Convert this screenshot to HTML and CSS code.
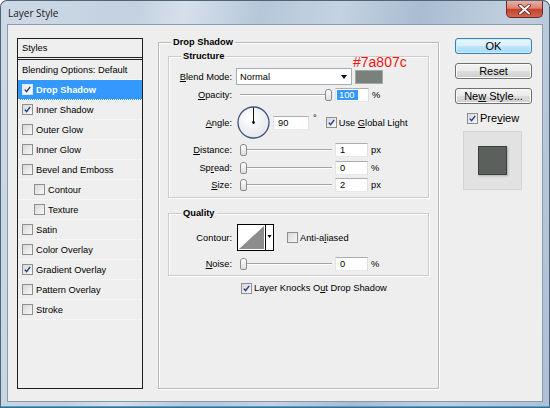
FILE: index.html
```html
<!DOCTYPE html>
<html lang="en">
<head>
    <meta charset="UTF-8">
    <title>Layer Style</title>
    <link rel="stylesheet" href="styles.css">
</head>
<body>
<div class="window">
    <div class="titlebar">
        <span class="title">Layer Style</span>
        <span class="close">
            <svg width="13" height="11" viewBox="0 0 13 11">
                <path d="M2 1.5 L11 9.5 M11 1.5 L2 9.5" stroke="#5a1f18" stroke-width="3.6" stroke-linecap="round"/>
                <path d="M2 1.5 L11 9.5 M11 1.5 L2 9.5" stroke="#fff" stroke-width="2" stroke-linecap="round"/>
            </svg>
        </span>
    </div>

    <div class="client">
        <!-- styles list -->
        <div class="styles-list">
            <div class="list-head">Styles</div>
            <div class="list-row">Blending Options: Default</div>
            <div class="list-row selected"><span class="cb on"><svg viewBox="0 0 11 11"><path d="M2.2 5.6 L4.4 8.2 L8.8 2.2"/></svg></span>Drop Shadow</div>
            <div class="list-row"><span class="cb on"><svg viewBox="0 0 11 11"><path d="M2.2 5.6 L4.4 8.2 L8.8 2.2"/></svg></span>Inner Shadow</div>
            <div class="list-row"><span class="cb"></span>Outer Glow</div>
            <div class="list-row"><span class="cb"></span>Inner Glow</div>
            <div class="list-row"><span class="cb"></span>Bevel and Emboss</div>
            <div class="list-row sub-row"><span class="cb"></span>Contour</div>
            <div class="list-row sub-row"><span class="cb"></span>Texture</div>
            <div class="list-row"><span class="cb"></span>Satin</div>
            <div class="list-row"><span class="cb"></span>Color Overlay</div>
            <div class="list-row"><span class="cb on"><svg viewBox="0 0 11 11"><path d="M2.2 5.6 L4.4 8.2 L8.8 2.2"/></svg></span>Gradient Overlay</div>
            <div class="list-row"><span class="cb"></span>Pattern Overlay</div>
            <div class="list-row"><span class="cb"></span>Stroke</div>
        </div>

        <!-- drop shadow panel -->
        <div class="group panel">
            <div class="group-title">Drop Shadow</div>

            <div class="group structure">
                <div class="group-title sub-title">Structure</div>

                <div class="row row-blend">
                    <span class="lbl"><u>B</u>lend Mode:</span>
                    <div class="select">Normal<span class="arrow"></span></div>
                    <div class="swatch"><span class="swatch-note">#7a807c</span></div>
                </div>

                <div class="row row-18">
                    <span class="lbl"><u>O</u>pacity:</span>
                    <div class="slider end"><span class="thumb"></span></div>
                    <div class="num"><span class="sel">100</span></div>
                    <span class="unit">%</span>
                </div>

                <div class="row row-angle">
                    <span class="lbl"><u>A</u>ngle:</span>
                    <svg class="dial" width="33" height="33" viewBox="0 0 33 33">
                        <defs>
                            <radialGradient id="dialfill" cx="0.4" cy="0.35" r="0.7">
                                <stop offset="0" stop-color="#ffffff"/>
                                <stop offset="1" stop-color="#e4e6ea"/>
                            </radialGradient>
                        </defs>
                        <circle cx="16.5" cy="16.5" r="15.5" fill="url(#dialfill)" stroke="#3f5480" stroke-width="1.3"/>
                        <line x1="16.5" y1="16.5" x2="16.5" y2="1.5" stroke="#111" stroke-width="1"/>
                        <circle cx="16.5" cy="16.5" r="1.4" fill="#111"/>
                    </svg>
                    <div class="num num-angle">90</div>
                    <span class="deg">°</span>
                    <span class="cb on cb-global"><svg viewBox="0 0 11 11"><path d="M2.2 5.6 L4.4 8.2 L8.8 2.2"/></svg></span>
                    <span class="cb-text">Use <u>G</u>lobal Light</span>
                </div>

                <div class="row row-18">
                    <span class="lbl"><u>D</u>istance:</span>
                    <div class="slider"><span class="thumb"></span></div>
                    <div class="num num-short">1</div>
                    <span class="unit">px</span>
                </div>

                <div class="row row-17">
                    <span class="lbl">Sp<u>r</u>ead:</span>
                    <div class="slider"><span class="thumb"></span></div>
                    <div class="num num-short">0</div>
                    <span class="unit">%</span>
                </div>

                <div class="row row-18">
                    <span class="lbl"><u>S</u>ize:</span>
                    <div class="slider"><span class="thumb"></span></div>
                    <div class="num num-short">2</div>
                    <span class="unit">px</span>
                </div>
            </div>

            <div class="group quality">
                <div class="group-title sub-title">Quality</div>

                <div class="row row-contour">
                    <span class="lbl">Contour:</span>
                    <svg class="contour" width="37" height="27" viewBox="0 0 37 27">
                        <rect x="0.5" y="0.5" width="36" height="26" fill="#fff" stroke="#000"/>
                        <polygon points="2,25 27,2 27,25" fill="#8c8c8c"/>
                        <line x1="28.5" y1="1" x2="28.5" y2="26" stroke="#000"/>
                        <polygon points="30.5,11 34.5,11 32.5,14" fill="#000"/>
                    </svg>
                    <span class="cb cb-anti"></span>
                    <span class="cb-text">Anti-a<u>l</u>iased</span>
                </div>

                <div class="row row-18 row-noise">
                    <span class="lbl"><u>N</u>oise:</span>
                    <div class="slider"><span class="thumb"></span></div>
                    <div class="num num-short">0</div>
                    <span class="unit">%</span>
                </div>
            </div>

            <div class="row knock">
                <span class="cb on"><svg viewBox="0 0 11 11"><path d="M2.2 5.6 L4.4 8.2 L8.8 2.2"/></svg></span>
                <span class="cb-text">Layer Knocks O<u>u</u>t Drop Shadow</span>
            </div>
        </div>

        <!-- buttons -->
        <div class="side">
            <div class="btn default">OK</div>
            <div class="btn">Reset</div>
            <div class="btn">Ne<u>w</u> Style...</div>
            <div class="preview-row">
                <span class="cb on"><svg viewBox="0 0 11 11"><path d="M2.2 5.6 L4.4 8.2 L8.8 2.2"/></svg></span>
                <span class="cb-text">Pre<u>v</u>iew</span>
            </div>
            <div class="preview">
                <div class="preview-square"></div>
            </div>
        </div>
    </div>
</div>
</body>
</html>
```

FILE: styles.css
```css
* {
    box-sizing: border-box;
}

body {
    margin: 0;
    width: 550px;
    height: 408px;
    overflow: hidden;
    background: #fff;
    font-family: "Liberation Sans", Arial, sans-serif;
    color: #000;
}

u {
    text-decoration: underline;
    text-underline-offset: 1px;
}

/* window frame */
.window {
    width: 550px;
    height: 408px;
    padding: 0 7px 6px;
    border-radius: 7px 7px 0 0;
    background: linear-gradient(100deg, #cdd9e6 0%, #c3d1e0 22%, #d6e0eb 30%, #b6c7da 42%, #c4d2e2 55%, #a9bcd2 68%, #c0cfdf 82%, #aec0d5 100%);
    box-shadow: inset 0 0 0 1px #51657a, inset 0 -2px 0 #3aa8d8;
}

.titlebar {
    height: 24px;
    display: flex;
    justify-content: space-between;
    align-items: flex-start;
}

.titlebar .title {
    padding: 6px 0 0 1px;
    font-family: "Open Sans", sans-serif;
    font-size: 10px;
    line-height: 14px;
    color: #1a1a1a;
}

.titlebar .close {
    width: 37px;
    height: 17px;
    margin-top: 1px;
    border: 1px solid #6b2a22;
    border-top: none;
    border-radius: 0 0 5px 5px;
    background: linear-gradient(#e9b0a5 0%, #dc8273 45%, #c5432f 52%, #d2644d 100%);
    display: flex;
    justify-content: center;
    align-items: center;
}

.client {
    height: 378px;
    background: #eeeeee;
    border: 1px solid #8b9aab;
    display: flex;
    align-items: flex-start;
    padding: 13px 0 0 9px;
    font-size: 9.3px;
}

/* checkboxes */
.cb {
    width: 11px;
    height: 11px;
    flex: none;
    border: 1px solid #8f8f8f;
    background: linear-gradient(135deg, #d8d8d8, #f8f8f8);
    display: inline-flex;
}

.cb svg {
    width: 9px;
    height: 9px;
}

.cb svg path {
    fill: none;
    stroke: #1f3b8c;
    stroke-width: 1.7;
}

.cb-text {
    margin-left: 2px;
    white-space: nowrap;
}

/* styles list */
.styles-list {
    width: 126px;
    height: 351px;
    flex: none;
    border: 1px solid #1e1e1e;
    background: #efefef;
}

.list-head {
    height: 21px;
    padding: 3px 0 0 4px;
    line-height: 12px;
    border-bottom: 3px double #222;
}

.list-row {
    height: 20px;
    padding-left: 4px;
    display: flex;
    align-items: center;
    border-bottom: 1px dotted #fdfdfd;
    white-space: nowrap;
}

.list-row .cb {
    margin-right: 3px;
}

.list-row.sub-row {
    padding-left: 16px;
}

.list-row.selected {
    background: #3399ff;
    color: #fff;
    font-weight: bold;
}

.list-row.selected .cb {
    border-color: #dfe9f5;
    background: linear-gradient(135deg, #e6e6e6, #ffffff);
}

/* grouped panels */
.group {
    border: 1px solid #b9b9b9;
    box-shadow: 1px 1px 0 #fff, inset 1px 1px 0 #fff;
}

.group-title {
    display: table;
    margin: -6px 0 0 3px;
    padding: 0 2px;
    line-height: 11px;
    font-weight: bold;
    background: #eeeeee;
}

.group-title.sub-title {
    margin-left: 12px;
}

.panel {
    width: 281px;
    height: 347px;
    flex: none;
    margin: 4px 0 0 15px;
    padding: 0 9px;
}

.structure {
    margin-top: 8px;
    padding-bottom: 3px;
    border-color: #cbcbcb;
}

.quality {
    margin-top: 15px;
    padding-bottom: 2px;
    border-color: #cbcbcb;
}

/* rows */
.row {
    display: flex;
    align-items: center;
    white-space: nowrap;
}

.lbl {
    width: 63px;
    flex: none;
    margin-right: 4px;
    text-align: right;
}

.row-blend {
    height: 19px;
    margin-top: 5px;
}

.row-18 {
    height: 18px;
}

.row-17 {
    height: 17px;
}

.row-angle {
    height: 37px;
}

.row-contour {
    height: 31px;
    margin-top: 3px;
}

.row-noise {
    margin-top: 2px;
}

.knock {
    height: 14px;
    margin-top: 5px;
    padding-left: 73px;
}

/* controls */
.select {
    width: 116px;
    height: 17px;
    border: 1px solid #a7adb5;
    background: #fff;
    padding: 0 4px 0 3px;
    display: flex;
    align-items: center;
    justify-content: space-between;
}

.select .arrow {
    width: 0;
    height: 0;
    border-top: 4px solid #111;
    border-left: 3.5px solid transparent;
    border-right: 3.5px solid transparent;
}

.swatch {
    width: 28px;
    height: 14px;
    margin-left: 3px;
    background: #7a807c;
    border: 1px solid #a2a6a4;
    position: relative;
}

.swatch-note {
    position: absolute;
    left: -3px;
    bottom: calc(100% + 2px);
    font-size: 14px;
    line-height: 14px;
    color: #f41414;
}

.slider {
    width: 96px;
    height: 14px;
    flex: none;
    margin-left: 1px;
    padding: 0 1px 0 3px;
    display: flex;
    align-items: center;
    justify-content: flex-start;
    background: linear-gradient(to bottom, transparent 6px, #a4a4a4 6px, #a4a4a4 7px, #ffffff 7px, #ffffff 8px, transparent 8px);
    background-origin: content-box;
    background-clip: content-box;
}

.slider.end {
    justify-content: flex-end;
}

.thumb {
    width: 7px;
    height: 12px;
    border: 1px solid #8b8b8b;
    border-radius: 3px 3px 2px 2px;
    background: linear-gradient(#ffffff, #dedede);
}

.num {
    width: 34px;
    height: 14px;
    margin-left: 2px;
    padding-left: 4px;
    line-height: 12px;
    background: #fff;
    border: 1px solid;
    border-color: #abadb3 #dbdfe6 #e3e9ef #e2e3ea;
}

.num-short {
    width: 33px;
}

.num .sel {
    margin-left: -3px;
    padding: 0 3px 0 2px;
    background: #3399ff;
    color: #fff;
}

.num-angle {
    width: 36px;
    margin-left: 3px;
}

.unit {
    margin-left: 3px;
}

.dial {
    margin-left: 1px;
    flex: none;
}

.deg {
    align-self: flex-start;
    margin: 9px 0 0 4px;
}

.cb-global {
    margin-left: 9px;
}

.contour {
    margin-left: 1px;
    flex: none;
}

.cb-anti {
    margin-left: 13px;
}

/* right column */
.side {
    width: 77px;
    flex: none;
    margin-left: 16px;
    display: flex;
    flex-direction: column;
}

.btn {
    height: 16px;
    margin-bottom: 9px;
    border: 1px solid #707070;
    border-radius: 3px;
    background: linear-gradient(#f3f3f3 0%, #ebebeb 48%, #dddddd 52%, #cfcfcf 100%);
    box-shadow: inset 0 0 0 1px #fbfbfb;
    font-size: 11px;
    line-height: 14px;
    text-align: center;
}

.btn.default {
    border-color: #3c7fb1;
    background: linear-gradient(#eaf6fd 0%, #d9f0fc 48%, #bee6fd 52%, #a7d9f5 100%);
    box-shadow: inset 0 0 0 1px #cdeefc;
}

.preview-row {
    height: 12px;
    margin: -1px 0 0 12px;
    display: flex;
    align-items: center;
    font-size: 11px;
}

.preview-row .cb-text {
    margin-left: 2px;
}

.preview {
    width: 59px;
    height: 59px;
    margin: 7px 0 0 8px;
    border: 1px solid #d4d4d4;
    background: #e2e2e2;
    display: flex;
    align-items: center;
    justify-content: center;
}

.preview-square {
    width: 29px;
    height: 29px;
    background: #5b605d;
    border: 1px solid #3c3f3d;
    box-shadow: 1px 1px 2px rgba(0, 0, 0, 0.25);
}
```
